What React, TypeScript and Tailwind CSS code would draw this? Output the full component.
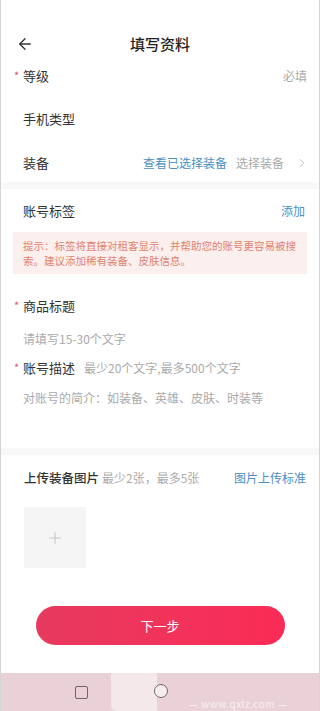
import React from 'react';
import { ArrowLeft, ChevronRight, Plus } from 'lucide-react';

const font = { fontFamily: '"Noto Sans CJK SC", "Noto Sans", sans-serif' };

function Star() {
  return <span className="absolute -left-[9px] top-[1px] text-[11px] text-[#d9556b]">*</span>;
}

export default function App() {
  return (
    <div className="w-[320px] h-[711px] bg-white flex flex-col border-x border-[#d4d4d4] overflow-hidden" style={font}>
      {/* header */}
      <div className="h-[58px] pt-[30px] relative flex justify-center">
        <ArrowLeft size={18} strokeWidth={1.8} className="absolute left-[15px] top-[35px] text-[#333]" />
        <span className="h-[28px] flex items-center text-[15px] font-medium text-[#222]">填写资料</span>
      </div>

      <div className="px-[22px]">
        <div className="h-[36px] flex items-center justify-between">
          <span className="relative text-[13px] text-[#333]">
            <Star />
            等级
          </span>
          <span className="text-[12px] text-[#aaa] mr-[-10px]">必填</span>
        </div>
        <div className="h-[50px] flex items-center">
          <span className="text-[13px] text-[#333]">手机类型</span>
        </div>
        <div className="h-[38px] flex items-center justify-between">
          <span className="text-[13px] text-[#333]">装备</span>
          <div className="flex items-center mr-[-12px]">
            <span className="text-[12px] text-[#4a90c4]">查看已选择装备</span>
            <span className="text-[12px] text-[#aaa] ml-[9px]">选择装备</span>
            <ChevronRight size={14} strokeWidth={1.5} className="text-[#bbb] ml-[11px]" />
          </div>
        </div>
      </div>

      <div className="h-[7px] bg-[#f8f8f8]" />

      <div className="px-[22px]">
        <div className="h-[43px] flex items-center justify-between">
          <span className="text-[13px] text-[#333]">账号标签</span>
          <span className="text-[12px] text-[#4a90c4] mr-[-8px]">添加</span>
        </div>
      </div>
      <div className="mx-[12px] bg-[#fcf0ee] px-[10px] py-[6px] text-[10.5px] leading-[15px] text-[#e0826f]">
        提示：标签将直接对租客显示，并帮助您的账号更容易被搜索。建议添加稀有装备、皮肤信息。
      </div>

      <div className="px-[22px] mt-[12px]">
        <div className="h-[40px] flex items-center">
          <span className="relative text-[13px] text-[#333]">
            <Star />
            商品标题
          </span>
        </div>
        <div className="h-[26px] flex items-center">
          <span className="text-[12px] text-[#aaa]">请填写15-30个文字</span>
        </div>
        <div className="h-[32px] flex items-center">
          <span className="relative text-[13px] text-[#333]">
            <Star />
            账号描述
          </span>
          <span className="text-[12px] text-[#aaa] ml-[9px]">最少20个文字,最多500个文字</span>
        </div>
        <div className="h-[28px] flex items-center">
          <span className="text-[12px] text-[#aaa]">对账号的简介：如装备、英雄、皮肤、时装等</span>
        </div>
      </div>

      <div className="h-[36px]" />
      <div className="h-[7px] bg-[#f8f8f8]" />

      <div className="px-[23px]">
        <div className="h-[46px] flex items-center justify-between">
          <div className="flex items-center">
            <span className="text-[12.5px] font-medium text-[#333]">上传装备图片</span>
            <span className="text-[12px] text-[#aaa] ml-[3px]">最少2张，最多5张</span>
          </div>
          <span className="text-[12px] text-[#4a90c4] mr-[-10px]">图片上传标准</span>
        </div>
        <div className="mt-[6px] w-[62px] h-[61px] bg-[#f5f5f5] flex items-center justify-center">
          <Plus size={18} strokeWidth={1.5} className="text-[#c8c8c8]" />
        </div>
      </div>

      <div className="mt-[38px] mx-auto w-[249px] h-[39px] rounded-full bg-gradient-to-r from-[#e73a5e] to-[#fb2b56] flex items-center justify-center">
        <span className="text-[13px] text-white">下一步</span>
      </div>

      <div className="mt-auto h-[38px] bg-[#ead1d7] relative flex items-center">
        <div className="absolute left-[74px] top-[13px] w-[13px] h-[13px] border-[1.5px] border-[#6f6468] rounded-[2px]" />
        <div className="absolute left-[110px] top-0 w-[46px] h-[38px] bg-white/50 rounded-bl-[6px]" />
        <div className="absolute left-[153px] top-[11px] w-[14px] h-[14px] border-[1.5px] border-[#6f6468] rounded-full bg-white/60" />
        <span className="absolute left-[188px] top-[23px] text-[10px] text-white/70 tracking-[0.5px]">— www.qxlz.com —</span>
      </div>
    </div>
  );
}
